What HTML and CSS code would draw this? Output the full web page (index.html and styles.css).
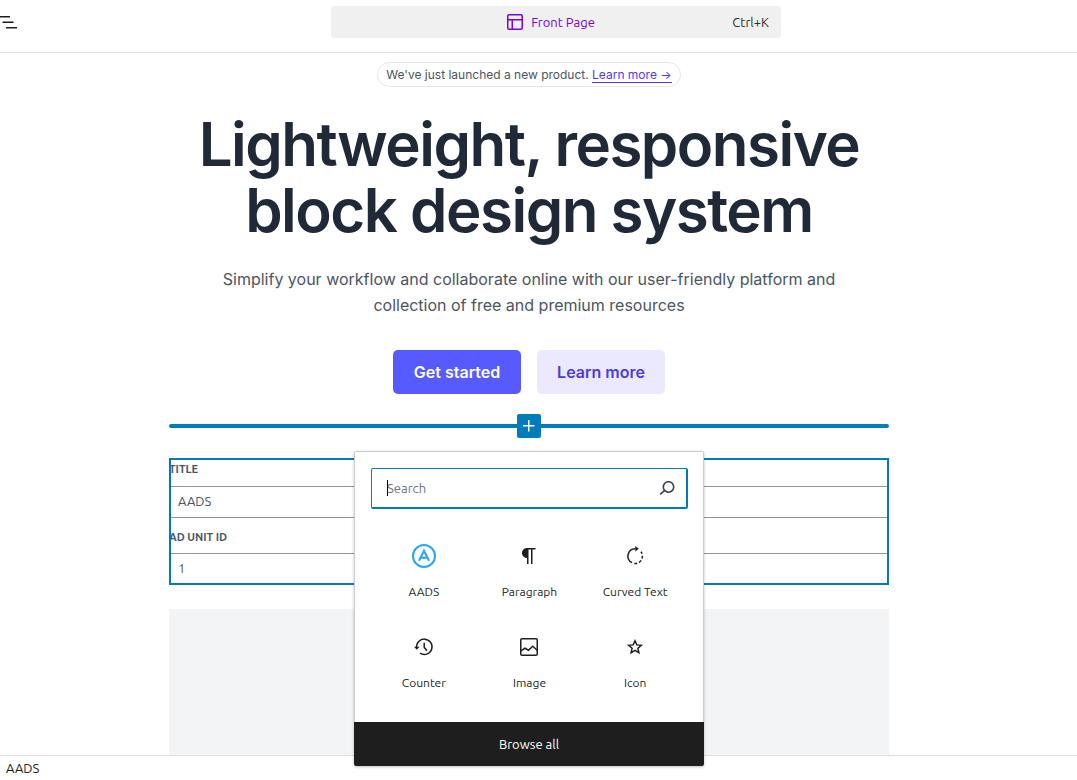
FILE: index.html
```
<!DOCTYPE html>
<html lang="en">
<head>
<meta charset="utf-8">
<meta name="viewport" content="width=device-width, initial-scale=1">
<title>Front Page</title>
<link rel="stylesheet" href="styles.css">
</head>
<body>
<header class="topbar">
  <button class="list-toggle" type="button" aria-label="List view">
    <svg viewBox="0 0 24 24" width="24" height="24"><path d="M3 6h11v1.5H3V6Zm3.5 5.5h11V13h-11v-1.5ZM21 17H10v1.5h11V17Z"/></svg>
  </button>
  <button class="command" type="button">
    <span class="command-title">
      <svg viewBox="0 0 24 24" width="24" height="24"><path d="M18 5.500H6a.5.5 0 0 0-.5.5v3h13V6a.5.5 0 0 0-.5-.5zm.5 5H10v8h8a.5.5 0 0 0 .5-.5v-7.500zm-10 0h-3V18a.5.5 0 0 0 .5.5h2.500v-8zM6 4h12a2 2 0 0 1 2 2v12a2 2 0 0 1-2 2H6a2 2 0 0 1-2-2V6a2 2 0 0 1 2-2z"/></svg>
      Front Page
    </span>
    <span class="command-key">Ctrl+K</span>
  </button>
</header>

<main class="canvas">
  <div class="column">
    <p class="announce">We've just launched a new product. <a href="#">Learn more →</a></p>
    <h1 class="headline">Lightweight, responsive block design system</h1>
    <p class="lead">Simplify your workflow and collaborate online with our user-friendly platform and collection of free and premium resources</p>
    <div class="actions">
      <button class="action primary" type="button">Get started</button>
      <button class="action" type="button">Learn more</button>
    </div>

    <div class="inserter">
      <button class="add" type="button" aria-label="Add block">
        <svg viewBox="0 0 24 24" width="24" height="24"><path d="M11 12.500V17.500H12.500V12.500H17.500V11H12.500V6H11V11H6V12.500H11Z"/></svg>
      </button>
      <section class="popover" aria-label="Block inserter">
        <div class="picker">
          <div class="search">
            <input type="search" placeholder="Search" aria-label="Search">
            <svg viewBox="0 0 24 24" width="24" height="24"><path d="M13.500 5C10.200 5 7.500 7.700 7.500 11c0 1.200.4 2.300 1 3.200l-3.800 3.600 1 1.100 3.900-3.500c1 .9 2.400 1.500 3.900 1.500 3.300 0 6-2.600 6-5.900S16.800 5 13.500 5zm0 10.400c-2.400 0-4.400-2-4.400-4.400s2-4.400 4.400-4.400 4.400 2 4.400 4.400-2 4.400-4.400 4.400z"/></svg>
          </div>
          <div class="blocks">
            <button class="block" type="button">
              <svg class="aads" viewBox="0 0 24 24" width="24" height="24"><circle cx="12" cy="12" r="11"/><path d="M7 16.700 12 6.800l5 9.900M8.800 13.800h6.400"/></svg>
              AADS
            </button>
            <button class="block" type="button">
              <svg viewBox="0 0 24 24" width="24" height="24"><path d="m9.996 14v-.225l.004.001v6.224h1.500v-14.500h2.500v14.500h1.500v-14.500h3v-1.500h-8.504c-2.761 0-5 2.239-5 5s2.239 5 5 5z"/></svg>
              Paragraph
            </button>
            <button class="block" type="button">
              <svg class="line" viewBox="0 0 24 24" width="24" height="24"><path d="M9 18.700A7.400 7.400 0 0 1 12.500 4.700M11.300 19.400q1.500.2 2.800-.2M16 18.300q1.300-.8 2.100-2M19 14.400q.5-1.300.4-2.700M19 9.800q-.4-1.200-1-2"/><path class="solid" d="M12.300 2 15.800 4.800 12.300 7.600z"/></svg>
              Curved Text
            </button>
            <button class="block" type="button">
              <svg class="line" viewBox="0 0 24 24" width="24" height="24"><path d="M4.700 13A7.700 7.700 0 1 1 8 18.200M12.200 7.800v4.400l2.600 3.600"/><path class="solid" d="M2 11.800h5.600l-2.800 3z"/></svg>
              Counter
            </button>
            <button class="block" type="button">
              <svg class="line" viewBox="0 0 24 24" width="24" height="24"><rect x="3.750" y="3.750" width="16.500" height="16.500" rx="1.250"/><path d="m4 15.800 4-2.600 3.400 2 4.400-4 4.300 4"/></svg>
              Image
            </button>
            <button class="block" type="button">
              <svg class="line" viewBox="0 0 24 24" width="24" height="24"><path d="m12 5.800 1.800 4.100 4.500.4-3.400 3 1 4.400-3.900-2.300-3.900 2.300 1-4.400-3.400-3 4.500-.4z"/></svg>
              Icon
            </button>
          </div>
        </div>
        <button class="browse" type="button">Browse all</button>
      </section>
    </div>

    <form class="ad-block">
      <label for="ad-title">TITLE</label>
      <input id="ad-title" type="text" value="AADS">
      <label for="ad-unit">AD UNIT ID</label>
      <input id="ad-unit" type="text" value="1">
    </form>
    <div class="placeholder"></div>
  </div>
</main>

<footer class="crumbs">AADS</footer>
</body>
</html>
```

FILE: styles.css
```
* { box-sizing: border-box; }

body {
  margin: 0;
  height: 100vh;
  display: flex;
  flex-direction: column;
  overflow: hidden;
  background: #fff;
  color: #1e1e1e;
  font: 13px/20px Ubuntu, "Noto Sans", sans-serif;
}

button, input { font: inherit; color: inherit; }
button { border: 0; padding: 0; background: none; }
svg { fill: currentColor; display: block; flex: none; }

.topbar {
  flex: none;
  display: flex;
  align-items: flex-start;
  padding: 6px 0 14px;
  border-bottom: 1px solid #ddd;
}
.list-toggle { width: 39px; margin: 4px 0 0 -4px; }
.command {
  width: 450px;
  height: 32px;
  margin: 0 auto;
  display: grid;
  grid-template-columns: 1fr auto 1fr;
  align-items: center;
  padding: 0 12px;
  border-radius: 4px;
  background: #f0f0f0;
}
.command-title {
  grid-column: 2;
  display: flex;
  align-items: center;
  gap: 4px;
  padding-right: 14px;
  color: #7a00df;
}
.command-key { justify-self: end; color: #2f2f2f; }

.canvas {
  flex: 1;
  display: flex;
  justify-content: center;
  padding: 9px 19px 0 0;
}
.column {
  width: 720px;
  display: flex;
  flex-direction: column;
  align-items: center;
  font-family: Inter, sans-serif;
  color: #4b5563;
}
.announce {
  margin: 0 0 24px;
  padding: 0 8px;
  border: 1px solid #e5e7eb;
  border-radius: 13px;
  font-size: 12px;
  line-height: 23px;
}
.announce a {
  color: #4f39f6;
  text-decoration: none;
  border-bottom: 1px solid currentColor;
}
.headline {
  margin: 0 0 23px;
  font-size: 60px;
  line-height: 66px;
  font-weight: 600;
  letter-spacing: -0.025em;
  text-align: center;
  color: #1f2937;
}
.lead {
  margin: 0 0 32px;
  padding: 0 48px;
  font-size: 16px;
  line-height: 26px;
  text-align: center;
}
.actions { display: flex; gap: 16px; margin-bottom: 20px; }
.action {
  width: 128px;
  height: 44px;
  border-radius: 5px;
  background: #ebe9fe;
  color: #4f39e6;
  font-size: 16px;
  font-weight: 600;
}
.action.primary { background: #575bff; color: #fff; }

.inserter {
  position: relative;
  align-self: stretch;
  display: flex;
  align-items: center;
  margin-bottom: 20px;
}
.inserter::before,
.inserter::after {
  content: "";
  flex: 1;
  height: 4px;
  background: #007cba;
}
.inserter::before { border-radius: 2px 0 0 2px; }
.inserter::after { border-radius: 0 2px 2px 0; }
.add { width: 24px; height: 24px; border-radius: 2px; background: #007cba; color: #fff; }

.popover {
  position: absolute;
  z-index: 2;
  top: 37px;
  left: 50%;
  width: 350px;
  margin-left: -175px;
  border-radius: 2px;
  background: #fff;
  color: #1e1e1e;
  font-family: Ubuntu, "Noto Sans", sans-serif;
  box-shadow: 0 1px 3px rgba(0, 0, 0, .25);
}
.picker {
  padding: 16px 15px 10px 16px;
  border: 1px solid #ccc;
  border-bottom: 0;
  border-radius: 2px 2px 0 0;
}
.search {
  display: flex;
  align-items: center;
  height: 41px;
  padding: 0 7px 0 15px;
  border: solid #007cba;
  border-width: 1px 2px 2px 1px;
  border-radius: 2px;
  color: #3c434a;
}
.search::before {
  content: "";
  width: 1px;
  height: 16px;
  margin-right: -1px;
  background: #000;
}
.search input {
  flex: 1;
  min-width: 0;
  padding: 0;
  border: 0;
  outline: 0;
  background: none;
}
.search input::placeholder { color: #6f7378; opacity: 1; }
.blocks {
  display: grid;
  grid-template-columns: repeat(3, 1fr);
  padding-top: 21px;
}
.block {
  height: 91px;
  display: flex;
  flex-direction: column;
  align-items: center;
  gap: 15px;
  padding-top: 14px;
  font-size: 12px;
  line-height: 18px;
}
.line { fill: none; stroke: currentColor; stroke-width: 1.5; }
.solid { fill: currentColor; stroke: none; }
.aads { fill: none; stroke: #2aa5f5; stroke-width: 2; }
.browse {
  display: block;
  width: 100%;
  height: 44px;
  border-radius: 0 0 2px 2px;
  background: #1e1e1e;
  color: #fff;
}

.ad-block {
  position: relative;
  align-self: stretch;
  display: flex;
  flex-direction: column;
  margin-bottom: 24px;
  font-family: Ubuntu, "Noto Sans", sans-serif;
}
.ad-block::after {
  content: "";
  position: absolute;
  inset: 0;
  border: 2px solid #007cba;
  pointer-events: none;
}
.ad-block label { height: 28px; font-size: 11px; line-height: 22px; font-weight: 600; }
.ad-block input + label { height: 35px; line-height: 38px; }
.ad-block input {
  height: 32px;
  padding: 0 8px 2px;
  border: 1px solid #949494;
  background: #fff;
}
.placeholder { flex: 1; align-self: stretch; background: #f3f4f6; }

.crumbs {
  flex: none;
  padding: 2px 6px;
  border-top: 1px solid #ddd;
}
```
